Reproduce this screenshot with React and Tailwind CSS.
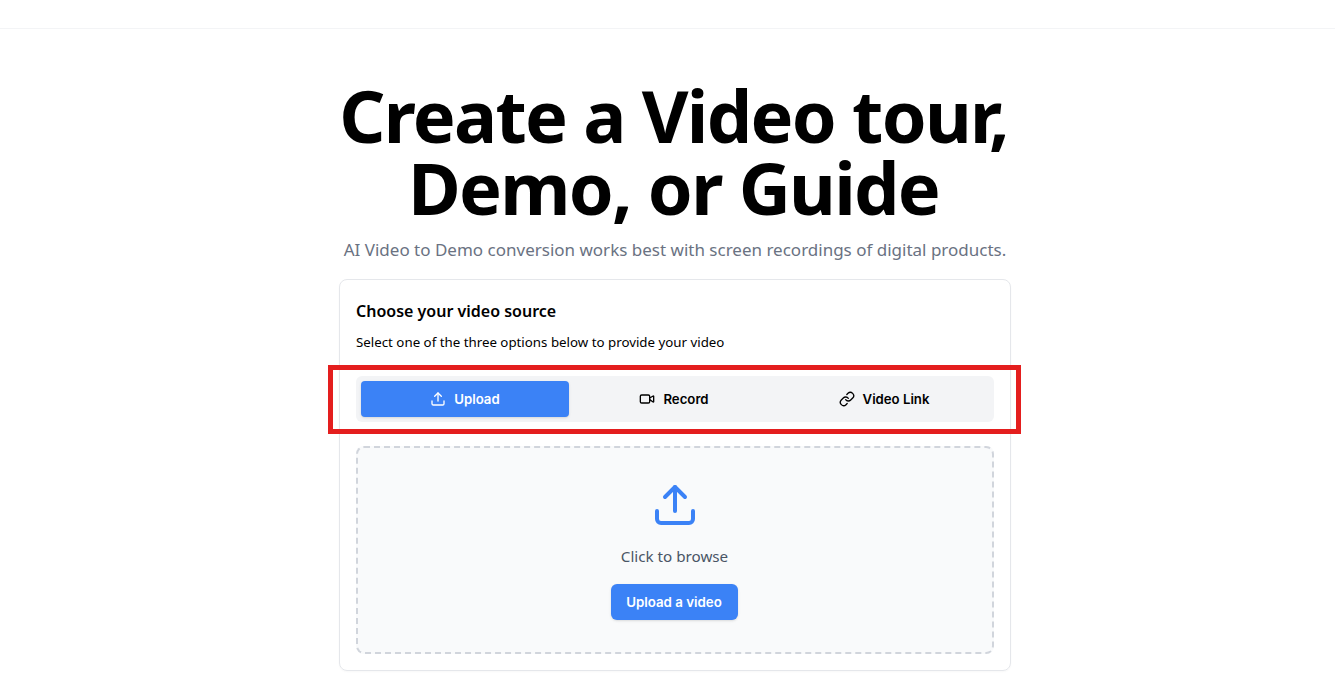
import React from "react";
import { Upload, Video, Link } from "lucide-react";

export default function App() {
  return (
    <div className="relative min-h-[682px] bg-white font-['Inter',sans-serif] text-black overflow-hidden">
      <div className="h-[29px] border-b border-gray-100" />
      <main className="flex flex-col items-center pt-[50px] pl-[15px]">
        <h1 className="-ml-[3px] text-center font-['Noto_Sans',sans-serif] font-bold text-[72px] leading-[72px] tracking-[-1.7px]">
          Create a Video tour,
          <br />
          Demo, or Guide
        </h1>
        <p className="mt-[13px] h-[28px] font-['Noto_Sans',sans-serif] text-[17px] leading-[28px] text-gray-500">
          AI Video to Demo conversion works best with screen recordings of digital products.
        </p>
        <section className="mt-[15px] w-[672px] h-[392px] rounded-lg border border-gray-200 px-4 pt-[17px] shadow-[0_1px_2px_rgba(0,0,0,0.03)]">
          <h2 className="font-['Noto_Sans',sans-serif] text-[16px] leading-[28px] font-semibold">Choose your video source</h2>
          <p className="mt-[7px] font-['Noto_Sans',sans-serif] text-[13.3px] leading-[20px]">Select one of the three options below to provide your video</p>
          <div className="mt-[24px] grid h-[46px] grid-cols-[208px_1fr_1fr] rounded-md bg-gray-100 p-[5px]">
            <button className="flex items-center justify-center gap-2 rounded bg-[#3b82f6] text-[13.2px] font-semibold text-white shadow-sm">
              <Upload size={16} /> <span className="pt-px">Upload</span>
            </button>
            <button className="flex items-center justify-center gap-2 text-[13.2px] font-semibold">
              <Video size={16} /> <span className="pt-px">Record</span>
            </button>
            <button className="flex items-center justify-center gap-2 text-[13.2px] font-semibold">
              <Link size={16} /> <span className="pt-px">Video Link</span>
            </button>
          </div>
          <div className="mt-[24px] flex h-[208px] flex-col items-center rounded-lg border-2 border-dashed border-gray-300 bg-gray-50 pt-[33px]">
            <Upload size={48} strokeWidth={2} className="text-[#3b82f6]" />
            <p className="mt-[15px] mr-[1px] font-['Noto_Sans',sans-serif] text-[15.2px] leading-[24px] text-gray-600">Click to browse</p>
            <button className="mt-[16px] mr-[2px] h-[36px] w-[127px] rounded-md bg-[#3b82f6] pt-px text-[13.3px] font-semibold text-white shadow-sm">
              Upload a video
            </button>
          </div>
        </section>
      </main>
      <div className="absolute left-[328px] top-[365px] h-[69px] w-[693px] border-[5px] border-[#e41e1e]" />
    </div>
  );
}
